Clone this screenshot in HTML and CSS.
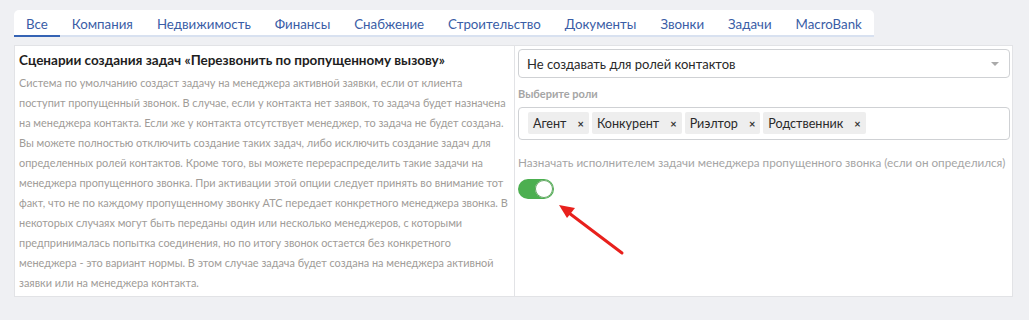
FILE: index.html
```html
<!DOCTYPE html>
<html lang="ru">
  <head>
    <meta charset="UTF-8" />
    <title>Сценарии задач</title>
    <link rel="stylesheet" href="styles.css">
  </head>
  <body>
    <div class="page">
      <!-- Tabs -->
      <ul class="tabs">
        <li class="tab active">Все</li>
        <li class="tab">Компания</li>
        <li class="tab">Недвижимость</li>
        <li class="tab">Финансы</li>
        <li class="tab">Снабжение</li>
        <li class="tab">Строительство</li>
        <li class="tab">Документы</li>
        <li class="tab">Звонки</li>
        <li class="tab">Задачи</li>
        <li class="tab">MacroBank</li>
      </ul>

      <div class="panel">
        <div class="col-info">
          <h3 class="info-title">Сценарии создания задач «Перезвонить по пропущенному вызову»</h3>
          <p class="info-text">Система по умолчанию создаст задачу на менеджера активной заявки, если от клиента поступит пропущенный звонок. В случае, если у контакта нет заявок, то задача будет назначена на менеджера контакта. Если же у контакта отсутствует менеджер, то задача не будет создана. Вы можете полностью отключить создание таких задач, либо исключить создание задач для определенных ролей контактов. Кроме того, вы можете перераспределить такие задачи на менеджера пропущенного звонка. При активации этой опции следует принять во внимание тот факт, что не по каждому пропущенному звонку АТС передает конкретного менеджера звонка. В некоторых случаях могут быть переданы один или несколько менеджеров, с которыми предпринималась попытка соединения, но по итогу звонок остается без конкретного менеджера - это вариант нормы. В этом случае задача будет создана на менеджера активной заявки или на менеджера контакта.</p>
        </div>

        <div class="col-form">
          <div class="select">
            <span>Не создавать для ролей контактов</span>
            <span class="caret"></span>
          </div>

          <div class="field-label">Выберите роли</div>
          <div class="tags-box">
            <span class="tag">Агент <b>×</b></span>
            <span class="tag">Конкурент <b>×</b></span>
            <span class="tag">Риэлтор <b>×</b></span>
            <span class="tag">Родственник <b>×</b></span>
          </div>

          <div class="switch-label">Назначать исполнителем задачи менеджера пропущенного звонка (если он определился)</div>
          <div class="switch on"><span class="knob"></span></div>
        </div>
      </div>

      <!-- annotation arrow -->
      <svg class="arrow" width="80" height="60" viewBox="0 0 80 60">
        <line x1="71" y1="53" x2="14" y2="10" stroke="#e8201c" stroke-width="3" stroke-linecap="round" />
        <polygon points="8,5 24,8 16,18" fill="#e8201c" />
      </svg>
    </div>
  </body>
</html>
```

FILE: styles.css
```css
* {
  margin: 0;
  padding: 0;
  box-sizing: border-box;
}

body {
  font-family: Lato, "Liberation Sans", Arial, sans-serif;
  background-color: #eff0f3;
  color: #333;
}

.page {
  position: relative;
  padding: 10px 16px 0 14px;
}

/* Tabs */
.tabs {
  list-style: none;
  display: inline-flex;
  background: #fff;
  border-radius: 5px 5px 0 0;
  border-bottom: 2px solid #d8e1f0;
}

.tab {
  padding: 5px 12px 5px 12px;
  height: 27px;
  line-height: 18px;
  font-size: 13.3px;
  color: #3a5da6;
  margin-bottom: -2px;
  border-bottom: 2px solid transparent;
}

.tab.active {
  border-bottom-color: #3563b4;
}

/* Panel */
.panel {
  display: flex;
  margin-top: 8px;
  width: 999px;
  height: 252px;
  background: #fff;
  border: 1px solid #e2e3e6;
}

.col-info {
  width: 500px;
  padding: 5px 5px 0 4px;
  border-right: 1px solid #e2e3e6;
}

.info-title {
  font-size: 13.5px;
  font-weight: 700;
  color: #1e1e1e;
  line-height: 18px;
  margin-bottom: 4px;
}

.info-text {
  font-size: 10.9px;
  line-height: 20px;
  color: #a09c98;
}

.col-form {
  flex: 1;
  padding: 3px 2px 0 3px;
}

.select {
  display: flex;
  align-items: center;
  justify-content: space-between;
  height: 29px;
  padding: 0 8px;
  border: 1px solid #cfd1d4;
  border-radius: 4px;
  font-size: 13px;
  color: #2a2a2a;
}

.caret {
  width: 0;
  height: 0;
  border-left: 4px solid transparent;
  border-right: 4px solid transparent;
  border-top: 4px solid #aaa;
  margin-right: 2px;
}

.field-label {
  font-size: 11px;
  font-weight: 700;
  color: #a5a5a5;
  margin: 9px 0 6px;
  line-height: 14px;
}

.tags-box {
  display: flex;
  gap: 3px;
  height: 33px;
  padding: 4px 9px;
  border: 1px solid #cfd1d4;
  border-radius: 4px;
}

.tag {
  display: flex;
  align-items: center;
  gap: 11px;
  height: 22px;
  padding: 0 5px;
  background: #eeeeee;
  border-radius: 2px;
  font-size: 12.6px;
  color: #2a2a2a;
}

.tag b {
  font-size: 11px;
  color: #333;
}

.switch-label {
  font-size: 11.7px;
  color: #a5a5a5;
  margin: 14px 0 9px;
  line-height: 16px;
}

.switch {
  position: relative;
  width: 36px;
  height: 20px;
  border-radius: 10px;
  background: #cfd1d4;
}

.switch.on {
  background: #4caf50;
}

.knob {
  position: absolute;
  top: 1px;
  right: 1px;
  width: 18px;
  height: 18px;
  border-radius: 50%;
  background: #fff;
  box-shadow: 0 0 0 1px #5fa35f inset;
}

.arrow {
  position: absolute;
  left: 551px;
  top: 200px;
}
```
